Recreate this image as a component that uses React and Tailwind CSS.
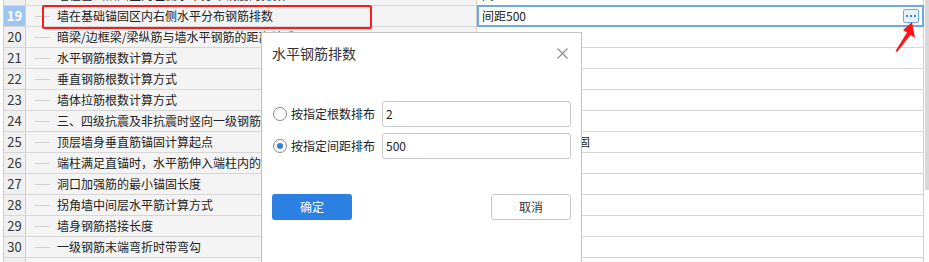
import React from "react";

const rows = [
  { n: 18, name: "墙在基础锚固区内左侧水平分布钢筋的排数", value: "间距500" },
  { n: 19, name: "墙在基础锚固区内右侧水平分布钢筋排数", value: "间距500", sel: true },
  { n: 20, name: "暗梁/边框梁/梁纵筋与墙水平钢筋的距离关系", value: "" },
  { n: 21, name: "水平钢筋根数计算方式", value: "" },
  { n: 22, name: "垂直钢筋根数计算方式", value: "" },
  { n: 23, name: "墙体拉筋根数计算方式", value: "" },
  { n: 24, name: "三、四级抗震及非抗震时竖向一级钢筋搭接", value: "" },
  { n: 25, name: "顶层墙身垂直筋锚固计算起点", value: "从板底开始计算锚固" },
  { n: 26, name: "端柱满足直锚时，水平筋伸入端柱内的长度", value: "" },
  { n: 27, name: "洞口加强筋的最小锚固长度", value: "" },
  { n: 28, name: "拐角墙中间层水平筋计算方式", value: "" },
  { n: 29, name: "墙身钢筋搭接长度", value: "" },
  { n: 30, name: "一级钢筋末端弯折时带弯勾", value: "" },
  { n: 31, name: "", value: "" },
];

const font = { fontFamily: '"Noto Sans CJK SC", "Noto Sans", sans-serif' };

function Row({ r }) {
  return (
    <div className="flex h-[21px] shrink-0 border-b border-[#d6d6d6]">
      <div
        className={
          "w-[22px] shrink-0 border-r border-[#cfcfcf] flex items-center justify-center text-[13px] " +
          (r.sel ? "bg-[#9ec5f2] text-white font-bold" : "bg-[#f0f0f0] text-[#333]")
        }
      >
        {r.n}
      </div>
      <div className="w-[451px] shrink-0 border-r border-[#cfcfcf] bg-[#f4f4f4] flex items-center overflow-hidden whitespace-nowrap">
        <div className="ml-[9px] w-[15px] h-px bg-[#cfcfcf] shrink-0" />
        <div className="ml-[7px] text-[12px] text-[#222]">{r.name}</div>
      </div>
      <div
        className={
          "w-[447px] shrink-0 border-r border-[#cfcfcf] bg-white flex items-center relative " +
          (r.sel ? "" : "")
        }
      >
        <span className="pl-[5px] text-[12px] text-[#222] whitespace-nowrap">{r.value}</span>
        {r.sel && (
          <div className="absolute left-0 top-[-1px] right-[-1px] bottom-[-1px] border-2 border-[#6da7e9]">
            <div className="absolute right-[3px] top-[2px] w-[16px] h-[14px] rounded-[2px] border border-[#6da7e9] bg-[#e9f2fc] flex items-center justify-center gap-[2px]">
              <span className="w-[2px] h-[2px] bg-[#3f86e0]" />
              <span className="w-[2px] h-[2px] bg-[#3f86e0]" />
              <span className="w-[2px] h-[2px] bg-[#3f86e0]" />
            </div>
          </div>
        )}
      </div>
    </div>
  );
}

function Radio({ checked }) {
  return (
    <div className="w-[14px] h-[14px] rounded-full border border-[#8a8a8a] bg-white flex items-center justify-center shrink-0">
      {checked && <div className="w-[6px] h-[6px] rounded-full bg-[#2f80e3]" />}
    </div>
  );
}

export default function App() {
  return (
    <div className="relative w-[929px] h-[262px] overflow-hidden bg-white" style={font}>
      {/* grid */}
      <div className="ml-[3px] mt-[-15px] w-[921px] border-l border-[#cfcfcf] flex flex-col">
        {rows.map((r) => (
          <Row key={r.n} r={r} />
        ))}
      </div>

      {/* scrollbar */}
      <div className="absolute right-0 top-0 w-[4px] h-[190px] bg-[#d8d8d8]" />

      {/* red highlight box */}
      <div className="absolute left-[42px] top-[5px] w-[330px] h-[24px] border-2 border-[#ff1a1a] rounded-[2px]" />

      {/* red arrow */}
      <svg className="absolute left-[890px] top-[18px]" width="30" height="36" viewBox="0 0 30 36">
        <polygon points="22,4 25,20 20.5,17 7,34 5.5,33 17,14.5 13,12" fill="#ff1414" />
      </svg>

      {/* dialog */}
      <div className="absolute left-[261px] top-[32px] w-[321px] h-[240px] bg-white border border-[#c2c2c2] flex flex-col">
        <div className="h-[40px] pl-[10px] pr-[13px] flex items-center justify-between">
          <span className="text-[14px] text-[#333]">水平钢筋排数</span>
          <svg width="11" height="11" viewBox="0 0 11 11">
            <path d="M0.5 0.5 L10.5 10.5 M10.5 0.5 L0.5 10.5" stroke="#8c8c8c" strokeWidth="1.2" />
          </svg>
        </div>
        <div className="mt-[28px] px-[10px] flex flex-col gap-[6px]">
          <div className="h-[26px] flex items-center">
            <div className="ml-[1px]"><Radio /></div>
            <span className="ml-[4px] w-[91px] text-[12px] text-[#222]">按指定根数排布</span>
            <div className="flex-1 h-[26px] border border-[#c8c8c8] rounded-[3px] flex items-center pl-[3px] text-[12px] text-[#222]">2</div>
          </div>
          <div className="h-[26px] flex items-center">
            <div className="ml-[1px]"><Radio checked /></div>
            <span className="ml-[4px] w-[91px] text-[12px] text-[#222]">按指定间距排布</span>
            <div className="flex-1 h-[26px] border border-[#c8c8c8] rounded-[3px] flex items-center pl-[3px] text-[12px] text-[#222]">500</div>
          </div>
        </div>
        <div className="mt-[35px] px-[10px] flex justify-between">
          <div className="w-[80px] h-[26px] rounded-[3px] bg-[#2c80e2] text-white text-[12px] flex items-center justify-center">确定</div>
          <div className="w-[80px] h-[26px] rounded-[3px] border border-[#c8c8c8] bg-white text-[#333] text-[12px] flex items-center justify-center">取消</div>
        </div>
      </div>
    </div>
  );
}
